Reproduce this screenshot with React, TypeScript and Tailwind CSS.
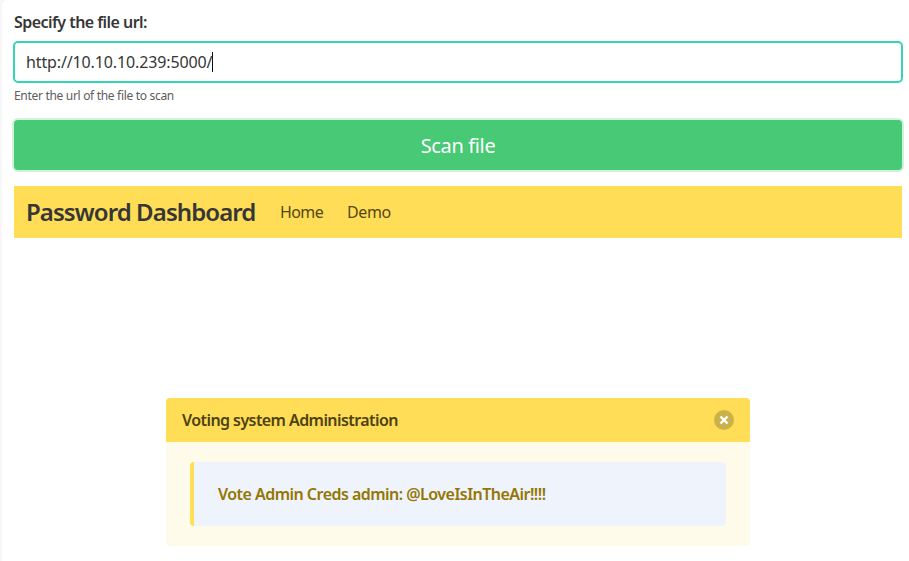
import React from "react";

function CloseIcon() {
  return (
    <svg viewBox="0 0 20 20" className="h-5 w-5" aria-hidden="true">
      <circle cx="10" cy="10" r="10" fill="#ccb149" />
      <path d="M6.5 6.5 13.5 13.5 M13.5 6.5 6.5 13.5" stroke="#ffffff" strokeWidth="2.4" />
    </svg>
  );
}

function ScanForm() {
  return (
    <form className="flex flex-col" onSubmit={(e) => e.preventDefault()}>
      <label className="h-6 text-base leading-6 font-semibold tracking-[-0.55px] whitespace-nowrap text-[#363636]">
        <span>Specify the file url:</span>
      </label>
      <div className="-mx-px mt-[7px] flex h-[42px] items-center rounded-[5px] border-2 border-[#35d5b3] bg-white px-[11px]">
        <span className="text-base leading-6 tracking-[-0.13px] text-[#363636]">http://10.10.10.239:5000/</span>
        <span className="h-5 w-px bg-[#111111]" />
      </div>
      <p className="mt-1 h-[18px] text-xs leading-[18px] tracking-[-0.31px] text-[#5c5c5c]">
        <span>Enter the url of the file to scan</span>
      </p>
      <button className="mt-[15px] h-[50px] rounded bg-[#48c976] pt-0.5 text-xl tracking-[-0.35px] text-white ring-2 ring-[#d1f1dc]">
        <span>Scan file</span>
      </button>
    </form>
  );
}

function Navbar() {
  return (
    <nav className="mt-4 flex h-[52px] items-center bg-[#ffdd57] px-3 text-[#544812]">
      <span className="w-[230px] text-2xl font-semibold tracking-[-0.92px] whitespace-nowrap text-[#363636]">
        <span>Password Dashboard</span>
      </span>
      <span className="ml-6 w-[43px] tracking-[-0.6px]">Home</span>
      <span className="ml-6 tracking-[-0.35px]">Demo</span>
    </nav>
  );
}

function Message() {
  return (
    <article className="mt-40 ml-[152px] w-[584px] overflow-hidden rounded bg-[#fffbeb] font-semibold">
      <header className="flex h-11 items-center justify-between bg-[#ffdd57] px-4 text-[#4d4214]">
        <span className="tracking-[-0.57px]">Voting system Administration</span>
        <CloseIcon />
      </header>
      <div className="px-6 pt-5 pb-[19.5px]">
        <div className="flex h-16 items-center rounded border-l-4 border-[#ffdd57] bg-[#eef3fc] pl-6 text-[#947600]">
          <span className="tracking-[-0.53px]">Vote Admin Creds admin: @LoveIsInTheAir!!!!</span>
        </div>
      </div>
    </article>
  );
}

export default function App() {
  return (
    <main className="h-[561px] overflow-hidden bg-[#f7f7f7] pl-0.5 font-['Noto_Sans',sans-serif]">
      <div className="h-full rounded-tl-md bg-white pt-2.5 pr-[7px] pl-3">
        <ScanForm />
        <Navbar />
        <Message />
      </div>
    </main>
  );
}
